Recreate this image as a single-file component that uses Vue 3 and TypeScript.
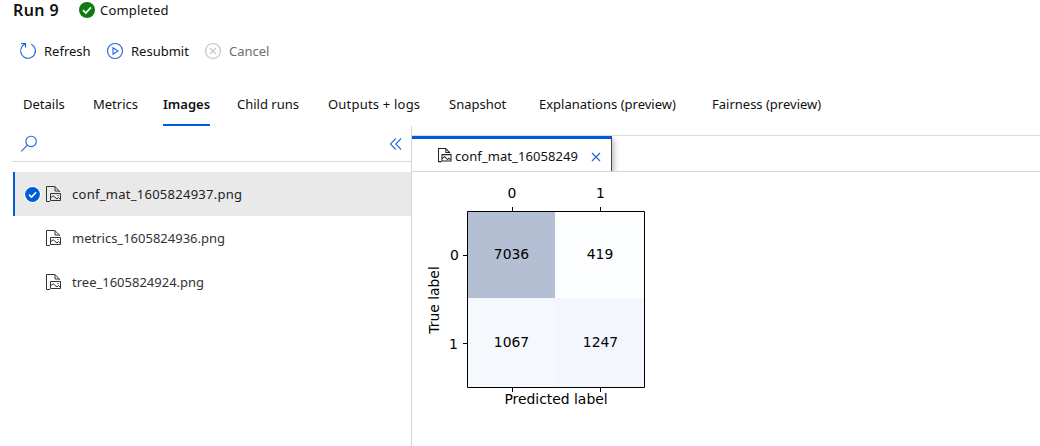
<script setup lang="ts">
interface Tab {
  label: string
  active?: boolean
}

const tabs: Tab[] = [
  { label: 'Details' },
  { label: 'Metrics' },
  { label: 'Images', active: true },
  { label: 'Child runs' },
  { label: 'Outputs + logs' },
  { label: 'Snapshot' },
  { label: 'Explanations (preview)' },
  { label: 'Fairness (preview)' },
]

const files: { name: string; selected: boolean }[] = [
  { name: 'conf_mat_1605824937.png', selected: true },
  { name: 'metrics_1605824936.png', selected: false },
  { name: 'tree_1605824924.png', selected: false },
]

const cells = [
  { x: 56, y: 40, w: 87, h: 86, value: 7036, fill: '#b4bfd3', tx: 99.5 },
  { x: 143, y: 40, w: 89, h: 86, value: 419, fill: '#fcfdff', tx: 188 },
  { x: 56, y: 126, w: 87, h: 89, value: 1067, fill: '#f5f9fd', tx: 99.5 },
  { x: 143, y: 126, w: 89, h: 89, value: 1247, fill: '#f3f7fd', tx: 188.5 },
]
</script>

<template>
  <div class="page">
    <header class="title-row">
      <h1>Run 9</h1>
      <svg class="status-icon" width="16" height="16" viewBox="0 0 16 16">
        <circle cx="8" cy="8" r="8" fill="#107c10" />
        <path d="M4 8.2 6.8 11 12 5.4" fill="none" stroke="#fff" stroke-width="1.7" />
      </svg>
      <span class="status">Completed</span>
    </header>

    <div class="toolbar">
      <button class="refresh">
        <svg width="18" height="18" viewBox="0 0 18 18" fill="none" stroke="#1763d8" stroke-width="1.1">
          <path d="M12.3 2.2a7.4 7.4 0 1 1-9.4 2.5L6.2 1.6" />
          <path d="M2.2 1.6h4.3v4" />
        </svg>
        <span>Refresh</span>
      </button>
      <button class="resubmit">
        <svg width="18" height="18" viewBox="0 0 18 18" fill="none" stroke="#2264dc" stroke-width="1.1">
          <circle cx="9" cy="9" r="7.5" />
          <path d="M7 5.7v6.6L12 9z" />
        </svg>
        <span>Resubmit</span>
      </button>
      <button class="cancel" disabled>
        <svg width="18" height="18" viewBox="0 0 18 18" fill="none" stroke="#c4c4c4" stroke-width="1.2">
          <circle cx="9" cy="9" r="7.5" />
          <path d="m5.8 5.8 6.4 6.4m0-6.4-6.4 6.4" />
        </svg>
        <span>Cancel</span>
      </button>
    </div>

    <nav class="tabs">
      <div v-for="tab in tabs" :key="tab.label" class="tab">
        <span :class="{ active: tab.active }">{{ tab.label }}</span>
      </div>
    </nav>

    <main class="content">
      <aside class="sidebar">
        <div class="search">
          <svg width="18" height="18" viewBox="0 0 18 18" fill="none" stroke="#2264dc" stroke-width="1.1">
            <circle cx="11.1" cy="6.4" r="5.2" />
            <path d="M7.4 10.2 1.2 16.4" />
          </svg>
          <svg width="14" height="14" viewBox="0 0 14 14" fill="none" stroke="#2d68dc" stroke-width="1.1">
            <path d="M7.8 1.5 2.5 7l5.3 5.5M13.1 1.5 7.8 7l5.3 5.5" />
          </svg>
        </div>
        <ul class="files">
          <li v-for="file in files" :key="file.name" :class="{ selected: file.selected }">
            <span class="check">
              <svg v-if="file.selected" width="17" height="17" viewBox="0 0 17 17">
                <circle cx="8.5" cy="8.5" r="8.5" fill="#fff" />
                <circle cx="8.5" cy="8.5" r="7.4" fill="#015cda" />
                <path d="m5 8.6 2.5 2.5 4.6-4.8" fill="none" stroke="#fff" stroke-width="1.5" />
              </svg>
            </span>
            <svg class="file-icon" width="16" height="17" viewBox="0 0 16 17" fill="none" stroke="#333" stroke-width="1">
              <path d="M4 15.5H.5v-15h8.3l4.7 4.7V6M9 .8v4.2h4.3" />
              <path d="M4.5 7.5h10v7h-10z" />
              <path d="m4.5 11.8 2.7-2 3.8 3.2 1.4-1.5 2.1 2M11.5 9.5h1" />
            </svg>
            <span class="name">{{ file.name }}</span>
          </li>
        </ul>
      </aside>

      <section class="viewer">
        <div class="tab-strip">
          <div class="file-tab">
            <svg width="14" height="15" viewBox="0 0 16 17" fill="none" stroke="#222" stroke-width="1.15">
              <path d="M4 15.5H.6V.6h8.2l4.7 4.6V6M9 .8v4.2h4.3" />
              <path d="M4.5 7.5h10.4v7.4H4.5z" />
              <path d="m4.5 12 2.8-2.2 3.8 3.3 1.4-1.5 2.2 2" />
            </svg>
            <span class="tab-name">conf_mat_16058249</span>
            <svg class="close" width="10" height="10" viewBox="0 0 10 10" fill="none" stroke="#2d68dc" stroke-width="1.3">
              <path d="m1 1 8 8m0-8-8 8" />
            </svg>
          </div>
        </div>

        <svg class="matrix" width="260" height="240" viewBox="0 0 260 240">
          <g v-for="cell in cells" :key="cell.value">
            <rect :x="cell.x" :y="cell.y" :width="cell.w" :height="cell.h" :fill="cell.fill" />
            <text :x="cell.tx" :y="cell.y < 100 ? 87 : 175" text-anchor="middle">{{ cell.value }}</text>
          </g>
          <path
            d="M55.5 39.5h177v176h-177zM100.5 35v4M188.5 35v4M100.5 216v4M188.5 216v4M51 83.5h4M51 171.5h4"
            fill="none" stroke="#000" stroke-width="1"
          />
          <text x="100" y="26" text-anchor="middle">0</text>
          <text x="188.5" y="26" text-anchor="middle">1</text>
          <text x="42.5" y="88" text-anchor="middle">0</text>
          <text x="41.5" y="177" text-anchor="middle">1</text>
          <text x="144" y="232" text-anchor="middle">Predicted label</text>
          <text transform="translate(27 128) rotate(-90)" text-anchor="middle">True label</text>
        </svg>
      </section>
    </main>
  </div>
</template>

<style>
body {
  margin: 0;
  background: #fff;
  overflow: hidden;
}
</style>

<style scoped>
.page {
  height: 446px;
  display: flex;
  flex-direction: column;
  overflow: hidden;
  background: #fff;
  color: #111;
  font: 13px/20px "Noto Sans", "Open Sans", sans-serif;
  white-space: nowrap;
}
.title-row {
  display: flex;
  align-items: center;
  height: 20px;
  padding-left: 13px;
}
h1 {
  width: 66px;
  margin: 0;
  font-size: 16px;
  line-height: 20px;
  font-weight: 600;
  letter-spacing: 0.4px;
}
.status {
  margin-left: 5px;
  letter-spacing: 0.2px;
}
.toolbar {
  display: flex;
  height: 62px;
  padding-left: 19px;
}
button {
  display: flex;
  align-items: center;
  gap: 7px;
  height: 62px;
  padding: 0;
  border: 0;
  background: none;
  color: #111;
  font: inherit;
}
.refresh { width: 87px; }
.resubmit { width: 98px; }
.cancel { color: #6d6d6d; }
.tabs {
  display: grid;
  grid-template-columns: 70px 70px 74px 91px 121px 90px 173px 130px;
  height: 44px;
  padding-left: 23px;
}
.tab span {
  display: inline-block;
  height: 30px;
  padding-top: 12px;
}
.tab:nth-child(5) span { letter-spacing: 0.2px; }
.tab .active {
  border-bottom: 2px solid #015cda;
  font-weight: 600;
}
.content {
  display: flex;
  flex: 1;
}
.sidebar {
  width: 399px;
  padding-left: 12px;
}
.search {
  display: flex;
  align-items: center;
  justify-content: space-between;
  height: 35px;
  padding: 0 9px 0 8px;
  border-bottom: 1px solid #d8d8d8;
}
.files {
  margin: 10px 0 0 1px;
  padding: 0;
  list-style: none;
}
li {
  display: flex;
  align-items: center;
  box-sizing: border-box;
  height: 44px;
  border-left: 2px solid transparent;
}
li.selected {
  border-color: #015cda;
  background: #e9e9e9;
}
.check {
  display: flex;
  width: 22px;
  padding-left: 9px;
}
.name {
  margin-left: 10px;
  color: #333;
}
.selected .name {
  color: #222;
  letter-spacing: 0.27px;
}
.viewer {
  flex: 1;
  border-left: 1px solid #d4d4d4;
}
.tab-strip {
  box-sizing: border-box;
  height: 37px;
  margin-top: 9px;
  border-top: 1px solid #dcdcdc;
  border-bottom: 1px solid #d4d4d4;
  overflow: hidden;
}
.file-tab {
  display: flex;
  align-items: center;
  box-sizing: border-box;
  width: 200px;
  height: 35px;
  padding: 1px 0 0 26px;
  border-top: 3px solid #015cda;
  border-right: 1px solid #444;
  box-shadow: 2px 3px 6px #bbb;
}
.tab-name {
  width: 125px;
  margin-left: 3px;
  letter-spacing: 0.07px;
}
.close { margin: 2px 0 0 11px; }
.matrix {
  display: block;
  font: 13.9px "DejaVu Sans", sans-serif;
}
</style>
